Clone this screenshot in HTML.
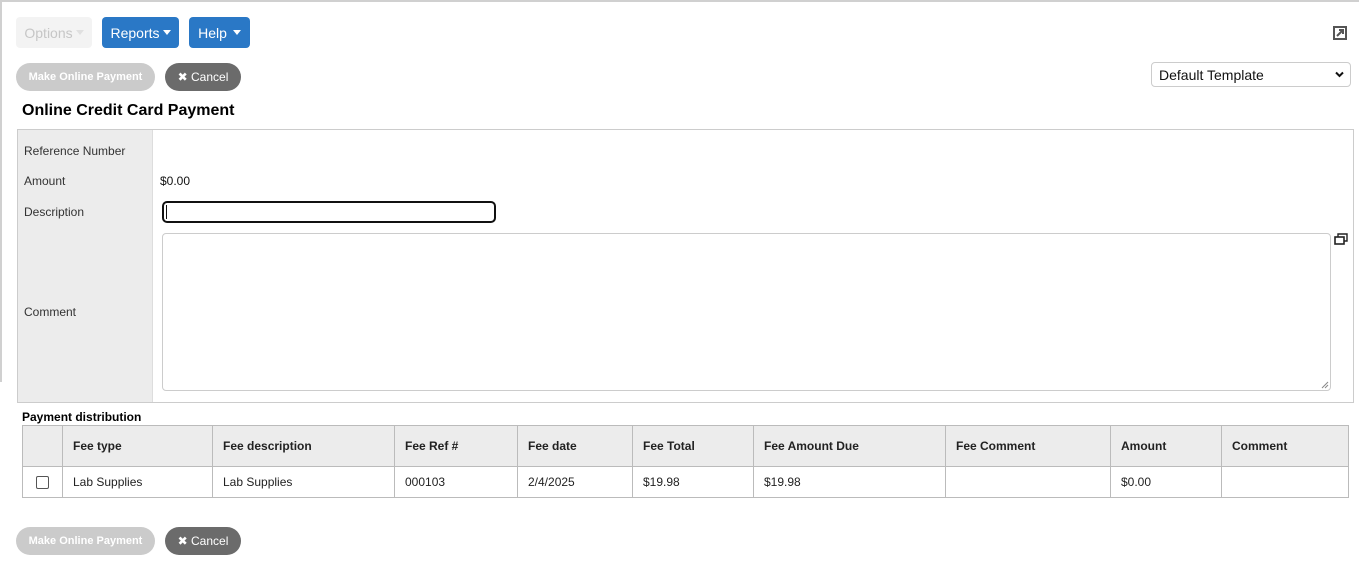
<!DOCTYPE html>
<html><head><meta charset="utf-8"><style>
*{box-sizing:border-box;margin:0;padding:0}
body{width:1359px;height:571px;background:#fff;font-family:"Liberation Sans",Arial,sans-serif;font-size:12px;color:#222;position:relative;overflow:hidden}
.a{position:absolute}
.btn{position:absolute;border-radius:4px;color:#fff;font-size:14px;display:flex;align-items:center;justify-content:center}
.blue{background:#2a78c6}
.pill{position:absolute;border-radius:14px;font-size:12px;font-weight:600;display:flex;align-items:center;justify-content:center;color:#fff}
.lbl{position:absolute;left:24px;font-size:12px;color:#333}
table{border-collapse:collapse;position:absolute;left:22px;top:425px;width:1327px}
td,th{border:1px solid #bbb;text-align:left;padding-left:10px;font-size:12px}
th{background:#ececec;height:41px;font-weight:bold;color:#222}
td{height:31px}
.tri{display:inline-block;width:0;height:0;border-left:4px solid transparent;border-right:4px solid transparent;border-top:5px solid #fff;margin-left:3px;vertical-align:middle}
</style></head><body>
<div class="a" style="left:0;top:0;width:1359px;height:2px;background:#d0d0d0"></div>
<div class="a" style="left:0;top:0;width:2px;height:382px;background:#d0d0d0"></div>

<div class="btn" style="left:16px;top:17px;width:76px;height:31px;background:#f3f3f3;color:#c6c6c6">Options<span class="tri" style="border-top-color:#e0e0e0"></span></div>
<div class="btn blue" style="left:102px;top:17px;width:77px;height:31px">Reports<span class="tri"></span></div>
<div class="btn blue" style="left:189px;top:17px;width:61px;height:31px">Help <span class="tri" style="margin-left:6px"></span></div>

<svg class="a" style="left:1333px;top:26px" width="14" height="14" viewBox="0 0 14 14"><rect x="1" y="1" width="12" height="12" fill="none" stroke="#555" stroke-width="2"/><path d="M4 10 L10 4 M6 4 H10 V8" stroke="#555" stroke-width="2" fill="none"/></svg>

<div class="pill" style="left:16px;top:63px;width:139px;height:28px;background:#cbcbcb;font-size:11px">Make Online Payment</div>
<div class="pill" style="left:165px;top:63px;width:76px;height:28px;background:#6b6b6b;font-weight:normal">✖&nbsp;Cancel</div>

<div class="a" style="left:1151px;top:62px;width:200px;height:25px;border:1px solid #ccc;border-radius:4px;font-size:14px;padding:4px 0 0 7px;color:#111">Default Template<svg style="position:absolute;right:6px;top:8px" width="9" height="7" viewBox="0 0 9 7"><path d="M1 1.5 L4.5 5 L8 1.5" stroke="#111" stroke-width="2" fill="none"/></svg></div>

<div class="a" style="left:22px;top:102px;font-size:16px;font-weight:bold;color:#000">Online Credit Card Payment</div>

<div class="a" style="left:17px;top:129px;width:1337px;height:274px;border:1px solid #ccc"></div>
<div class="a" style="left:18px;top:130px;width:135px;height:272px;background:#ececec;border-right:1px solid #ddd"></div>
<div class="lbl" style="top:144px">Reference Number</div>
<div class="lbl" style="top:174px">Amount</div>
<div class="lbl" style="top:205px">Description</div>
<div class="lbl" style="top:305px">Comment</div>
<div class="a" style="left:160px;top:174px;font-size:12px;color:#111">$0.00</div>
<div class="a" style="left:162px;top:201px;width:334px;height:22px;border:2px solid #111;border-radius:5px"></div>
<div class="a" style="left:166px;top:205px;width:1px;height:14px;background:#111"></div>
<div class="a" style="left:162px;top:233px;width:1169px;height:158px;border:1px solid #ccc;border-radius:4px"></div>
<svg class="a" style="left:1320px;top:380px" width="9" height="9" viewBox="0 0 9 9"><path d="M8 2 L2 8 M8 5 L5 8" stroke="#888" stroke-width="1"/></svg>
<svg class="a" style="left:1334px;top:233px" width="14" height="12" viewBox="0 0 14 12"><rect x="1" y="4" width="9" height="7" fill="none" stroke="#222" stroke-width="1.6"/><path d="M4 4 V1 H13 V8 H10" fill="none" stroke="#222" stroke-width="1.4"/></svg>

<div class="a" style="left:22px;top:410px;font-size:12px;font-weight:bold;color:#000">Payment distribution</div>
<table>
<tr><th style="width:40px"></th><th style="width:150px">Fee type</th><th style="width:182px">Fee description</th><th style="width:123px">Fee Ref #</th><th style="width:115px">Fee date</th><th style="width:121px">Fee Total</th><th style="width:192px">Fee Amount Due</th><th style="width:165px">Fee Comment</th><th style="width:111px">Amount</th><th>Comment</th></tr>
<tr><td style="padding-left:13px"><div style="width:13px;height:13px;border:1px solid #555;border-radius:2px"></div></td><td>Lab Supplies</td><td>Lab Supplies</td><td>000103</td><td>2/4/2025</td><td>$19.98</td><td>$19.98</td><td></td><td>$0.00</td><td></td></tr>
</table>

<div class="pill" style="left:16px;top:527px;width:139px;height:28px;background:#cbcbcb;font-size:11px">Make Online Payment</div>
<div class="pill" style="left:165px;top:527px;width:76px;height:28px;background:#6b6b6b;font-weight:normal">✖&nbsp;Cancel</div>
</body></html>
